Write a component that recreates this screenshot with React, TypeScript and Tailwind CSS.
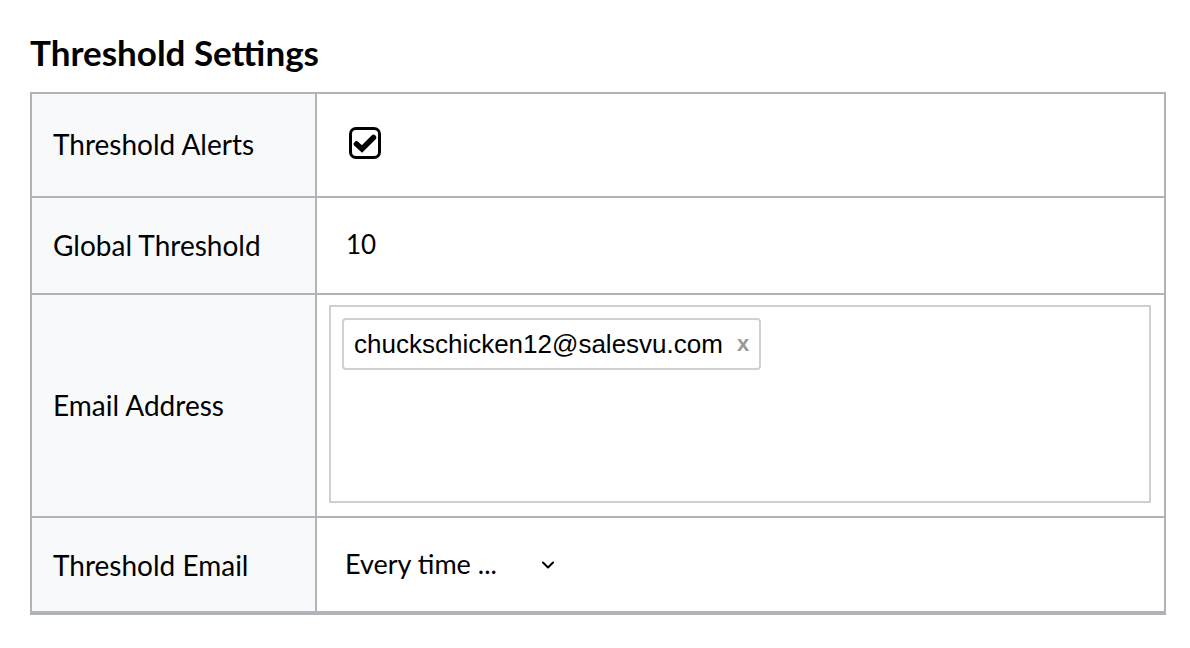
import React from "react";

const labelFont = { fontFamily: "Lato, 'Noto Sans', sans-serif" };

function Check() {
  return (
    <div className="w-[32px] h-[32px] border-[3px] border-black rounded-[7px] flex items-center justify-center">
      <svg width="24" height="20" viewBox="0 0 24 20">
        <path d="M3.5 11 L9 16 L20.5 4.5" fill="none" stroke="black" strokeWidth="5.5" strokeLinecap="round" strokeLinejoin="miter" />
      </svg>
    </div>
  );
}

export default function App() {
  return (
    <div className="w-[1190px] h-[648px] bg-white text-black" style={labelFont}>
      <div className="h-[92px] pl-[30px] pt-[32px]">
        <h1 className="text-[35px] leading-[40px] font-bold">Threshold Settings</h1>
      </div>
      <div className="ml-[30px] w-[1136px] border-2 border-b-4 border-[#b0b3b8]">
        <div className="flex h-[104px] border-b-2 border-[#b0b3b8]">
          <div className="w-[285px] shrink-0 bg-[#f8f9fb] border-r-2 border-[#b0b3b8] flex items-center pl-[21px] pb-[2px] text-[28px]">Threshold Alerts</div>
          <div className="flex-1 flex items-center pl-[32px] pb-[4px]">
            <Check />
          </div>
        </div>
        <div className="flex h-[97px] border-b-2 border-[#b0b3b8]">
          <div className="w-[285px] shrink-0 bg-[#f8f9fb] border-r-2 border-[#b0b3b8] flex items-center pl-[21px] pb-[2px] text-[28px]">Global Threshold</div>
          <div className="flex-1 flex items-center pl-[29px] pb-[2px] text-[26px]">10</div>
        </div>
        <div className="flex h-[223px] border-b-2 border-[#b0b3b8]">
          <div className="w-[285px] shrink-0 bg-[#f8f9fb] border-r-2 border-[#b0b3b8] flex items-center pl-[21px] pb-[2px] text-[28px]">Email Address</div>
          <div className="flex-1 pl-[12px] pr-[13px] pt-[10px] pb-[13px]">
            <div className="h-full border-2 border-[#d0d0d0] pl-[11px] pt-[11px]">
              <div className="inline-flex items-center h-[52px] border-2 border-[#d0d0d0] rounded-[4px] pl-[10px] pr-[10px]" style={{ fontFamily: "'Liberation Sans', Arial, sans-serif" }}>
                <span className="text-[26px] leading-none">chuckschicken12@salesvu.com</span>
                <span className="ml-[14px] text-[22px] font-bold text-[#999999] leading-none">x</span>
              </div>
            </div>
          </div>
        </div>
        <div className="flex h-[93px]">
          <div className="w-[285px] shrink-0 bg-[#f8f9fb] border-r-2 border-[#b0b3b8] flex items-center pl-[21px] text-[28px]">Threshold Email</div>
          <div className="flex-1 flex items-center pl-[28px] text-[27px]">
            <span>Every time ...</span>
            <svg className="ml-[44px]" width="14" height="10" viewBox="0 0 14 10">
              <path d="M2 2.5 L7 7.5 L12 2.5" fill="none" stroke="black" strokeWidth="2" strokeLinecap="round" strokeLinejoin="round" />
            </svg>
          </div>
        </div>
      </div>
    </div>
  );
}
